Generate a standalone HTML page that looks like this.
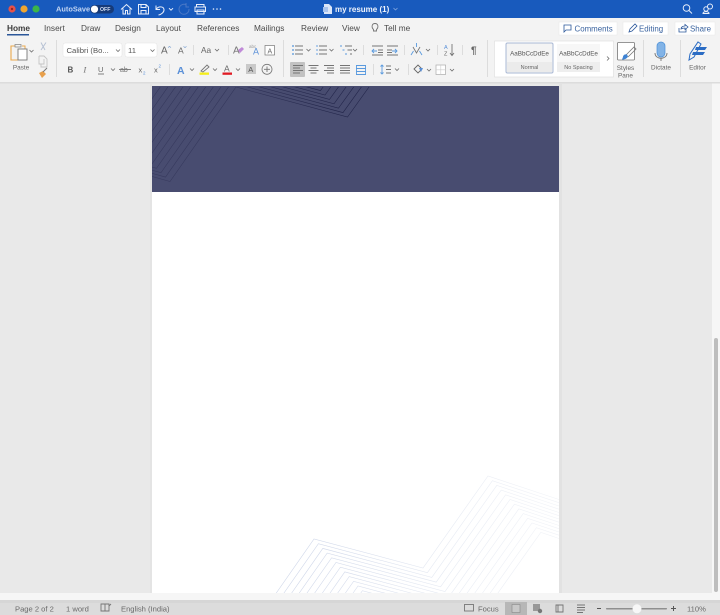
<!DOCTYPE html>
<html><head><meta charset="utf-8"><title>my resume (1)</title>
<style>
html,body{margin:0;padding:0;width:720px;height:615px;overflow:hidden;background:#e9e9e9}
#wrap{position:absolute;left:0;top:0;width:720px;height:615px;overflow:hidden}
svg{display:block;overflow:hidden}
text{font-family:"Liberation Sans",sans-serif;fill:#555}
.t{font-size:8.300px;fill:#4a4a4a}
.l{font-size:6.400px;fill:#666;text-anchor:middle}
.c{fill:none;stroke:#6e6e6e;stroke-width:.8}
.i{fill:none;stroke:#747474;stroke-width:.9}
.w{fill:none;stroke:#e8eefa;stroke-width:1}
.b{fill:none;stroke:#5a9ade;stroke-width:.9}
</style></head><body><div id="wrap">
<svg width="720" height="615" viewBox="0 0 720 615" xmlns="http://www.w3.org/2000/svg">
<defs>
<linearGradient id="fade" gradientUnits="userSpaceOnUse" x1="300" y1="0" x2="540" y2="0"><stop offset="0" stop-color="#cdd5e8"/><stop offset=".5" stop-color="#e2e7f1"/><stop offset="1" stop-color="#f0f2f7"/></linearGradient>
<linearGradient id="topfade" gradientUnits="userSpaceOnUse" x1="152" y1="0" x2="340" y2="0"><stop offset="0" stop-color="#383b5f"/><stop offset=".5" stop-color="#32355a"/><stop offset="1" stop-color="#22254a"/></linearGradient>
<clipPath id="tp"><rect x="152" y="87" width="407" height="105"/></clipPath>
<polyline id="top" fill="none" points="140,173 170,181.5 236,87 347.5,117 369,87 375,79"/>
<path id="chv" class="c" d="M-2 -1 L0 1 L2 -1"/>
<path id="lst" class="i" d="M-3 -4H5M-3 0H5M-3 4H5"/>
</defs>
<g style="filter:blur(.3px)">
<rect width="720" height="615" fill="#e9e9e9"/>
<!-- page -->
<rect x="559" y="84" width="3" height="510" fill="#e2e2e2"/>
<rect x="150" y="84" width="2" height="510" fill="#e4e4e4"/>
<rect x="152" y="86" width="407" height="507" fill="#fff"/>
<rect x="152" y="86" width="407" height="106" fill="#484c70"/>
<g clip-path="url(#tp)" stroke="url(#topfade)" stroke-width=".6">
<use href="#top"/><use href="#top" transform="translate(-4.5,-4.4)"/><use href="#top" transform="translate(-9,-8.8)"/><use href="#top" transform="translate(-13.5,-13.2)"/><use href="#top" transform="translate(-18,-17.6)"/><use href="#top" transform="translate(-22.5,-22)"/><use href="#top" transform="translate(-27,-26.4)"/><use href="#top" transform="translate(-31.5,-30.8)"/><use href="#top" transform="translate(-36,-35.2)"/><use href="#top" transform="translate(-40.5,-39.6)"/><use href="#top" transform="translate(-45,-44)"/>
</g>
<g fill="none" stroke="url(#fade)" stroke-width=".6">
<polyline points="272.1,599 314,539 423,568 488,476 559,499.5"/>
<polyline points="279.8,599 318.4,543.7 427.4,572.7 492.4,480.7 559,502.7"/>
<polyline points="287.5,599 322.8,548.4 431.8,577.4 496.8,485.4 559,506"/>
<polyline points="295.1,599 327.2,553.1 436.2,582.1 501.2,490.1 559,509.2"/>
<polyline points="302.8,599 331.6,557.8 440.6,586.8 505.6,494.8 559,512.5"/>
<polyline points="310.5,599 336,562.5 445,591.5 510,499.5 559,515.7"/>
<polyline points="318.2,599 340.4,567.2 449.4,596.2 514.4,504.2 559,519"/>
<polyline points="325.9,599 344.8,571.9 446.7,599 455.1,599 518.8,508.9 559,522.2"/>
<polyline points="333.5,599 349.2,576.6 433.4,599 462.9,599 523.2,513.6 559,525.5"/>
<polyline points="341.2,599 353.6,581.3 420.1,599 470.6,599 527.6,518.3 559,528.7"/>
<polyline points="348.9,599 358,586 406.9,599 478.3,599 532,523 559,532"/>
<polyline points="356.6,599 362.4,590.7 393.6,599 486,599 536.4,527.7 559,535.2"/>
<polyline points="364.3,599 366.8,595.4 380.3,599 493.7,599 540.8,532.4 559,538.5"/>
</g>
<!-- scrollbar -->
<rect x="712" y="83" width="8" height="511" fill="#f6f6f6"/>
<rect x="714" y="338" width="4" height="254" rx="2" fill="#bdbdbd"/>

<!-- title bar -->
<rect width="720" height="18" fill="#185abd"/>
<circle cx="12" cy="9" r="3.6" fill="#e5524b"/><circle cx="12" cy="9" r="1.2" fill="#98261f"/>
<circle cx="24" cy="9" r="3.6" fill="#efa52f"/><circle cx="36" cy="9" r="3.6" fill="#3bb54a"/>
<text x="56" y="11.6" style="font-size:7.4px;font-weight:bold;fill:#c3d5f2">AutoSave</text>
<rect x="90" y="5" width="24" height="8.5" rx="4.2" fill="#163a78"/>
<circle cx="94.5" cy="9.2" r="3.6" fill="#fff"/>
<text x="100" y="11.2" style="font-size:5.2px;font-weight:bold;fill:#d5e0f4">OFF</text>
<path class="w" d="M121 9.5 L126.5 4.500 L132 9.5 M123 8.500V14H125.500V10.500H127.500V14H130V8.500"/>
<path class="w" d="M138.500 4.500H146L148.500 7V14H138.500Z M141 4.500V7.500H146V4.500 M141 14V10.500H146V14"/>
<path class="w" d="M156 5.500V9.500H160 M156 9.500C158 6 163.500 6 164 9.500C164.300 12 161.500 14.500 158.500 15"/>
<path class="w" transform="translate(171,9.2)" d="M-2 -1 L0 1 L2 -1"/>
<path fill="none" stroke="#4a78c6" d="M189 9A5 5 0 1 1 186 4.7"/><path fill="none" stroke="#4a78c6" d="M186 3V7H189"/>
<path class="w" d="M196.500 7V4.500H204V7 M195 7H205.500V11.500H195Z M197 10H204V14H197Z"/>
<circle cx="213.500" cy="9" r=".8" fill="#e8eefa"/><circle cx="217" cy="9" r=".8" fill="#e8eefa"/><circle cx="220.500" cy="9" r=".8" fill="#e8eefa"/>
<path fill="#dbe6f8" d="M324 4H329L332 7V14H324Z"/><rect x="323" y="7" width="5" height="5" fill="#a9c4ee"/>
<text x="335" y="11.800" style="font-size:8px;font-weight:bold;fill:#f0f4fc">my resume (1)</text>
<path fill="none" stroke="#8eaee2" stroke-width=".7" d="M393.500 8 L395.500 10 L397.500 8"/>
<circle cx="686.500" cy="8" r="3.300" class="w"/><path class="w" d="M689 10.500L692 13.500"/>
<circle cx="710" cy="6.500" r="2.500" class="w"/><circle cx="706" cy="9" r="2.200" class="w"/><path class="w" d="M703 13.500C703 11 709 11 709 13.500Z"/>

<!-- tabs and ribbon -->
<rect y="18" width="720" height="64" fill="#f3f3f3"/>
<rect y="82" width="720" height="1.500" fill="#dcdcdc"/>
<text x="7" y="31" style="font-size:8.300px;font-weight:bold;fill:#3c3c3c">Home</text>
<rect x="7" y="34" width="22" height="1.500" fill="#2b579a"/>
<text class="t" x="44" y="31">Insert</text>
<text class="t" x="81" y="31">Draw</text>
<text class="t" x="115" y="31">Design</text>
<text class="t" x="156" y="31">Layout</text>
<text class="t" x="197" y="31">References</text>
<text class="t" x="254" y="31">Mailings</text>
<text class="t" x="301" y="31">Review</text>
<text class="t" x="342" y="31">View</text>
<path class="i" d="M373.500 31V29.500C371 27 372 23.500 375 23.500C378 23.500 379 27 376.500 29.500V31Z"/>
<text class="t" x="384" y="31">Tell me</text>

<rect x="559" y="22" width="58" height="13" fill="#fff" stroke="#e8e8e8" stroke-width=".5"/>
<path fill="none" stroke="#2b579a" stroke-width=".8" d="M564 25H571V30H566L564 32Z"/>
<text x="574.500" y="31.500" style="font-size:7.900px;fill:#3a639f">Comments</text>
<rect x="623" y="22" width="45" height="13" fill="#fff" stroke="#e8e8e8" stroke-width=".5"/>
<path fill="none" stroke="#2b579a" stroke-width=".8" d="M629 32L630 29L635 24L637 26L632 31Z"/>
<text x="639" y="31.500" style="font-size:7.900px;fill:#3a639f">Editing</text>
<rect x="675" y="22" width="40" height="13" fill="#fff" stroke="#e8e8e8" stroke-width=".5"/>
<path fill="none" stroke="#2b579a" stroke-width=".8" d="M679 28V32H686V29 M681 29C681 27 683 26 685 26V24.500L688 27L685 29.500V28C683 28 682 28.500 681 29Z"/>
<text x="690" y="31.500" style="font-size:7.900px;fill:#3a639f">Share</text>

<!-- separators -->
<g stroke="#d6d6d6" stroke-width=".8">
<path d="M56.500 40V77M283.500 40V77M487.500 40V77M643.500 40V77M680.500 40V77"/>
<path d="M193.500 45V55M228.500 45V55M363.500 45V55M404.500 45V55M437.500 45V55M462.500 45V55M169.500 64V75M373.500 64V75M408.500 64V75"/>
</g>

<!-- clipboard -->
<path fill="none" stroke="#eba84c" stroke-width="1.100" d="M15 46H11V60H18"/>
<path fill="none" stroke="#888" stroke-width=".8" d="M15 44.500H21V47H15Z"/>
<path fill="none" stroke="#eba84c" stroke-width="1" d="M22 46H25V49"/>
<rect x="18" y="49" width="9" height="11" fill="#fff" stroke="#777" stroke-width=".9"/>
<use href="#chv" x="31.500" y="51"/>
<text class="l" x="21" y="69.500">Paste</text>
<path fill="none" stroke="#b7c2d4" stroke-width="1" d="M41 42.500L45 50M46 42.500L41 50"/>
<path fill="none" stroke="#c4c4c4" stroke-width=".9" d="M39 56H44L47 59V67H41V64M39 56V64H44V59"/>
<path fill="#e8a04c" d="M39 73L43 71L46 74L42 78Z"/>
<path fill="none" stroke="#777" stroke-width="1" d="M43 72L47 68"/>

<!-- font -->
<rect x="63" y="43" width="59" height="14" rx="2" fill="#fff" stroke="#e2e2e2" stroke-width=".5"/>
<text x="66.500" y="52.800" style="font-size:7.700px;fill:#555">Calibri (Bo...</text>
<use href="#chv" x="118" y="50.500"/>
<rect x="125" y="43" width="32" height="14" rx="2" fill="#fff" stroke="#e2e2e2" stroke-width=".5"/>
<text x="128" y="52.800" style="font-size:7.700px;fill:#555">11</text>
<use href="#chv" x="152.500" y="50.500"/>
<text x="161" y="53.500" style="font-size:10px;fill:#666">A</text><path fill="none" stroke="#6b94cc" stroke-width=".7" d="M168 47.500L169.500 46.500L171 47.500"/>
<text x="178" y="53.500" style="font-size:8.500px;fill:#666">A</text><path fill="none" stroke="#6b94cc" stroke-width=".7" d="M183.500 46.500L185 47.500L186.500 46.500"/>
<text x="201" y="53" style="font-size:8.300px;fill:#666">Aa</text><use href="#chv" x="217" y="50"/>
<text x="233" y="53.500" style="font-size:10px;fill:#777">A</text><path fill="#c08ad8" d="M238 50L242 47L244 49L240 53Z"/>
<text x="249" y="48" style="font-size:4.500px;fill:#999">abc</text><text x="253" y="54.500" style="font-size:9px;fill:#5a90d8">A</text>
<rect x="265" y="45.500" width="9.500" height="9.500" fill="#fff" stroke="#777" stroke-width=".7"/><text x="267.500" y="53.300" style="font-size:7px;fill:#666">A</text>

<!-- font row 2 -->
<text x="67.500" y="72.500" style="font-size:8px;font-weight:bold;fill:#555">B</text>
<text x="83.500" y="72.500" style="font-size:8px;font-style:italic;font-family:'Liberation Serif',serif;fill:#666">I</text>
<text x="98" y="72" style="font-size:7.500px;fill:#666">U</text><path class="i" d="M98 74H104"/><use href="#chv" x="113" y="69.500"/>
<text x="120" y="72" style="font-size:7px;fill:#777">ab</text><path class="i" d="M119 69.500H131"/>
<text x="138.500" y="72.500" style="font-size:7.500px;fill:#666">x</text><text x="143" y="74.500" style="font-size:4.500px;fill:#5a90d8">2</text>
<text x="154" y="72.500" style="font-size:7.500px;fill:#666">x</text><text x="158.500" y="67.500" style="font-size:4.500px;fill:#5a90d8">2</text>
<text x="177" y="74" style="font-size:10.500px;font-weight:bold;fill:#5a90d8">A</text><use href="#chv" x="192" y="69.500"/>
<path fill="none" stroke="#777" stroke-width=".9" d="M201 71L207 65L209 67L203 72Z"/><rect x="199.500" y="72.500" width="9.500" height="2.300" fill="#f5ee1a"/><use href="#chv" x="215" y="69.500"/>
<text x="224" y="71.500" style="font-size:8.500px;fill:#666">A</text><rect x="222.500" y="72.500" width="9.500" height="2.300" fill="#e01b24"/><use href="#chv" x="238" y="69.500"/>
<rect x="246" y="64" width="10" height="10" fill="#c9c9c9"/><text x="248.300" y="72" style="font-size:7.500px;fill:#555">A</text>
<circle cx="267" cy="69.300" r="5" fill="none" stroke="#777" stroke-width=".8"/><path class="i" d="M264 69.300H270M267 66.500V72"/>

<!-- paragraph row 1 -->
<g>
<circle cx="293" cy="46" r=".9" fill="#4a8fd8"/><circle cx="293" cy="50" r=".9" fill="#4a8fd8"/><circle cx="293" cy="54" r=".9" fill="#4a8fd8"/><use href="#lst" x="298" y="50"/><use href="#chv" x="308.500" y="50"/>
<path class="b" d="M317 45V47M317 49V51M317 53V55"/><use href="#lst" x="322" y="50"/><use href="#chv" x="331.500" y="50"/>
<path class="b" d="M340 46H342M342.500 50H344.500M345 54H347"/><path class="i" d="M345 46H352M347.500 50H352M350 54H352"/><use href="#chv" x="355" y="50"/>
<path class="i" d="M372 46H383M378 50H383M378 52.500H383M372 55H383"/><path class="b" d="M377 51H372M374 49L372 51L374 53"/>
<path class="i" d="M387 46H398M387 50H392M387 52.500H392M387 55H398"/><path class="b" d="M392 51H397M395 49L397 51L395 53"/>
<path fill="none" stroke="#777" stroke-width=".9" d="M413 47L416.500 53L420 47"/><path class="b" d="M411 55L413.500 51M422 55L419.500 51M416.500 43V47"/><use href="#chv" x="428" y="50"/>
<text x="444" y="49" style="font-size:5.500px;fill:#5a90d8">A</text><text x="444" y="55.500" style="font-size:5.500px;fill:#666">Z</text><path class="i" d="M452 44V55M450 53L452 55.500L454 53"/>
<text x="471" y="53.500" style="font-size:10px;font-weight:bold;fill:#666">¶</text>
</g>

<!-- paragraph row 2 -->
<rect x="290" y="62" width="15" height="15" rx="1" fill="#c2c2c2"/>
<path class="i" d="M293 65.500H303M293 68H300M293 70.500H303M293 73H300"/>
<path class="i" d="M308.500 65.500H318.500M310.500 68H316.500M308.500 70.500H318.500M310.500 73H316.500"/>
<path class="i" d="M324 65.500H334M327 68H334M324 70.500H334M327 73H334"/>
<path class="i" d="M340 65.500H350M340 68H350M340 70.500H350M340 73H350"/>
<path class="b" d="M356 65.500H366M356 68.500H366M356 71.500H366M356 74.500H366M356.500 65V75M365.500 65V75"/>
<path class="b" d="M382 65V74M380.500 66.500L382 65L383.500 66.500M380.500 72.500L382 74L383.500 72.500"/>
<path class="i" d="M386 66H391M386 69.500H391M386 73H391"/><use href="#chv" x="397" y="69.500"/>
<path fill="none" stroke="#666" stroke-width=".9" d="M414 69L418 65L422 69L418 73Z"/><path fill="#5a90d8" d="M419 68H423L421 72Z"/><use href="#chv" x="429" y="70"/>
<rect x="436" y="65" width="9.500" height="9.500" fill="#fff" stroke="#aaa" stroke-width=".7"/><path stroke="#ccc" stroke-width=".6" d="M440.800 65V74.500M436 69.800H445.500"/><use href="#chv" x="452" y="70"/>

<!-- styles -->
<rect x="494.500" y="41" width="119" height="36" fill="#fff" stroke="#e0e0e0" stroke-width=".7"/>
<rect x="506" y="43" width="47" height="30" rx="1.500" fill="#f4f4f4" stroke="#a9b8d4" stroke-width="1"/>
<rect x="507" y="62" width="45" height="10" fill="#ebebeb"/>
<text x="529.500" y="55.500" style="font-size:6.300px;fill:#555;text-anchor:middle">AaBbCcDdEe</text>
<text x="529.500" y="69" style="font-size:5.500px;fill:#666;text-anchor:middle">Normal</text>
<rect x="557" y="44" width="43" height="28" fill="#f7f7f7"/>
<rect x="557" y="62" width="43" height="10" fill="#eeeeee"/>
<text x="578.500" y="55.500" style="font-size:6.300px;fill:#555;text-anchor:middle">AaBbCcDdEe</text>
<text x="578.500" y="69" style="font-size:5.500px;fill:#666;text-anchor:middle">No Spacing</text>
<path class="c" d="M607 56.500L609 58.500L607 60.500"/>
<rect x="617.500" y="42.500" width="17" height="17.500" rx="1" fill="#fff" stroke="#777" stroke-width=".8"/>
<path fill="none" stroke="#777" stroke-width=".8" d="M626 55L634 47L636 49L628 57"/>
<path fill="#3f83d3" d="M623 57C623 55 625 54 627 54.500L628 56.500C627 59 623 60 622 59.500Z"/>
<text class="l" x="625.500" y="70">Styles</text><text class="l" x="625.500" y="77.500">Pane</text>

<!-- dictate -->
<rect x="657" y="42" width="8" height="15" rx="4" fill="#82b3e6" stroke="#4a8fd8" stroke-width=".7"/>
<path class="i" d="M655 53C655 60 667 60 667 53M661 58V61"/>
<text class="l" x="661" y="69.500">Dictate</text>
<!-- editor -->
<path fill="none" stroke="#2b6cc4" stroke-width="1" d="M689 60L690 54L698 42L701 44L694 57Z"/>
<path fill="#2b6cc4" d="M696 47H707L705 50H695Z M693 52H705L703 55H692Z"/>
<text class="l" x="697.500" y="69.500">Editor</text>

<!-- status bar -->
<rect y="593" width="720" height="7" fill="#f6f6f6"/>
<rect x="0" y="600" width="720" height="15" fill="#dcdcdc"/>
<rect x="0" y="600" width="720" height="3" fill="#d6d6d6"/>
<text x="15" y="611.500" style="font-size:7.600px;fill:#6a6a6a">Page 2 of 2</text>
<text x="66" y="611.500" style="font-size:7.600px;fill:#6a6a6a">1 word</text>
<text x="121" y="611.500" style="font-size:7.600px;fill:#6a6a6a">English (India)</text>
<text x="478" y="611.500" style="font-size:7.600px;fill:#6a6a6a">Focus</text>
<text x="687" y="611.500" style="font-size:7.600px;fill:#6a6a6a">110%</text>
<path class="i" d="M101 604H109V611H101Z M105 604V611 M109 606L111 604"/>
<rect x="464.500" y="604.500" width="9" height="6.500" fill="none" stroke="#777" stroke-width=".9"/>
<rect x="505" y="602" width="22" height="13" fill="#b7b7b7"/>
<rect x="512" y="604.500" width="8" height="8" fill="#c8c8c8" stroke="#888" stroke-width=".6"/>
<rect x="533" y="604" width="7" height="7" fill="#999"/><circle cx="540" cy="611" r="2.200" fill="#777"/>
<path class="i" d="M556 605H563V612H556Z M558 605V612"/>
<path class="i" d="M577 605H585M577 607.500H585M577 610H585M577 612.500H583"/>
<rect x="597" y="608" width="4" height="1" fill="#555"/>
<rect x="606" y="608" width="61" height="1.500" rx=".7" fill="#8f8f8f"/>
<circle cx="637" cy="608.800" r="4.500" fill="#f7f7f7"/>
<path stroke="#555" stroke-width="1" d="M671 608.500H676M673.500 606V611"/>
</g>
</svg>
</div></body></html>
